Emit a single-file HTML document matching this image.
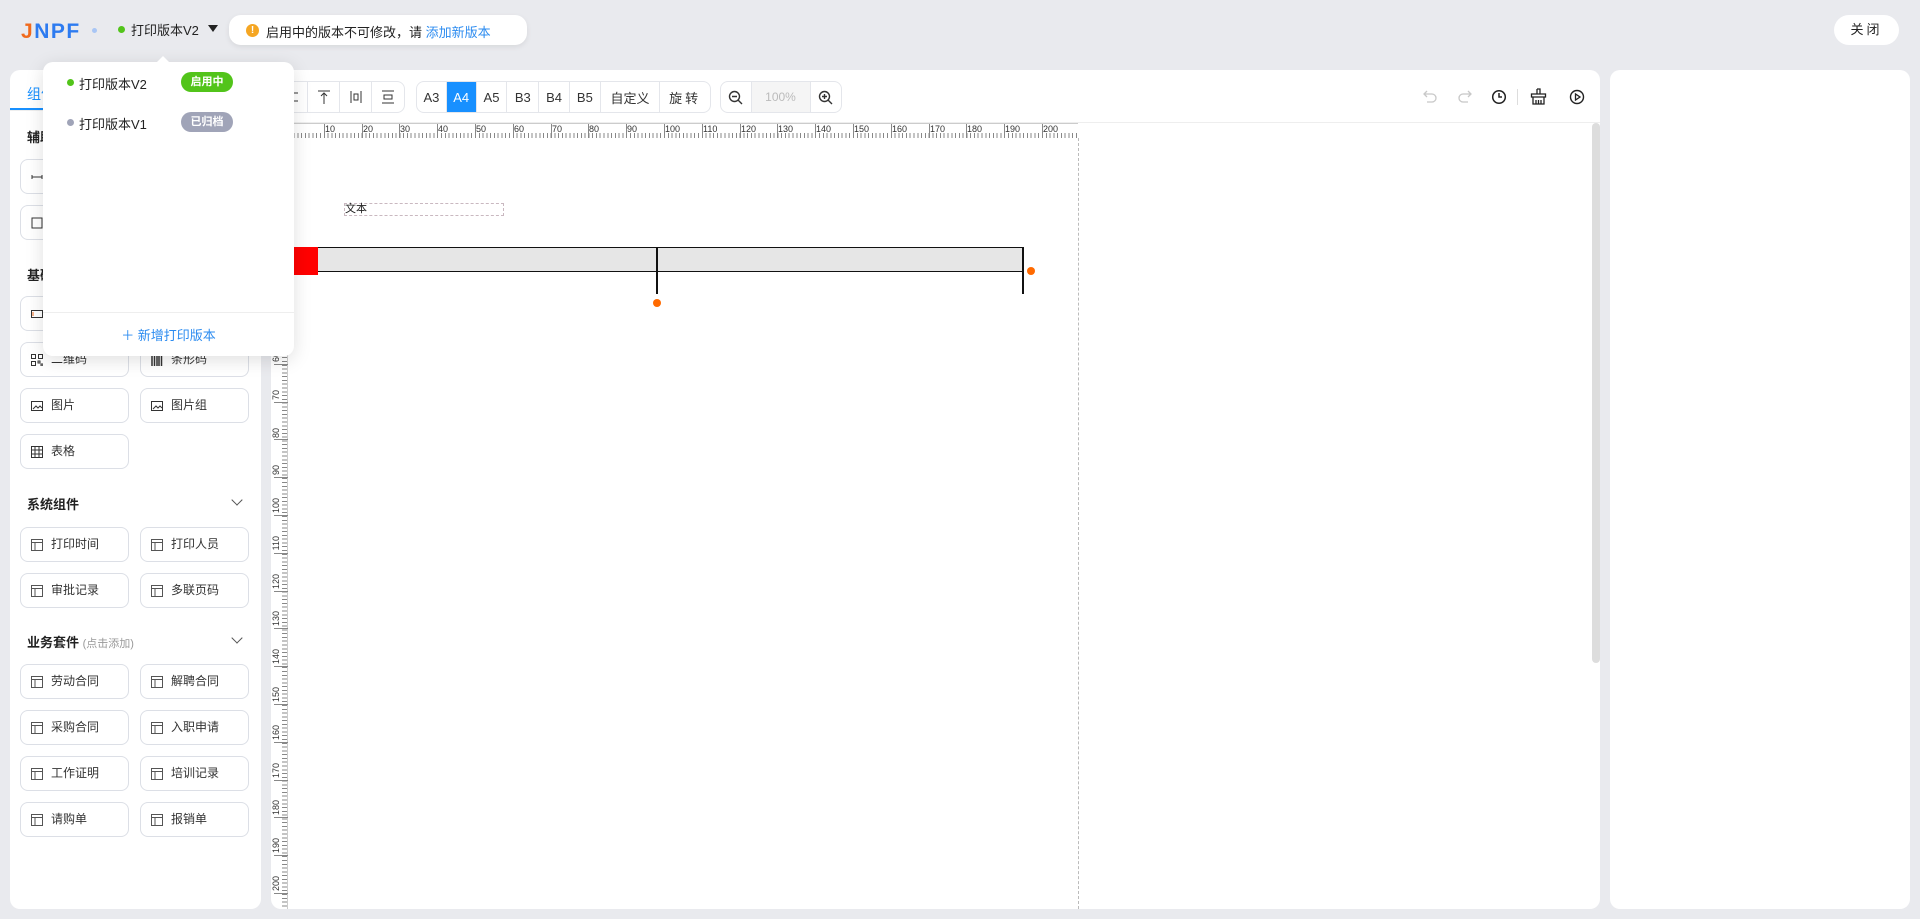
<!DOCTYPE html>
<html><head><meta charset="utf-8">
<style>
*{box-sizing:border-box;margin:0;padding:0}
body{width:1920px;height:919px;background:#e9eaee;font-family:"Liberation Sans","Noto Sans CJK SC",sans-serif;position:relative;overflow:hidden;color:#333}
.abs{position:absolute}
.panel{position:absolute;background:#fff;border-radius:10px}
.btn{position:absolute;width:109px;height:35px;border:1px solid #dcdfe6;border-radius:8px;font-size:12px;color:#333;line-height:33px;padding-left:30px;background:#fff}
.btn svg{position:absolute;left:10px;top:11px}
.sec{position:absolute;left:27px;font-size:13px;font-weight:bold;color:#222}
.chev{position:absolute;left:233px;width:8px;height:8px;border-right:1.3px solid #555;border-bottom:1.3px solid #555;transform:rotate(45deg)}
.grp{position:absolute;top:81px;height:32px;border:1px solid #e4e6eb;border-radius:8px;background:#fff;display:flex;overflow:hidden}
.grp div{height:30px;border-right:1px solid #e4e6eb;display:flex;align-items:center;justify-content:center;font-size:13px;color:#333}
.grp div:last-child{border-right:none}
.hl{position:absolute;top:124px;font-size:9px;color:#333;line-height:10px}
.hm{position:absolute;top:124px;width:1px;height:14px;background:#888}
.vl{position:absolute;left:272px;font-size:9px;color:#333;writing-mode:vertical-rl;transform:rotate(180deg);line-height:9px}
.vm{position:absolute;left:274px;width:14px;height:1px;background:#888}
</style></head><body>

<!-- top bar -->
<div class="abs" style="left:21px;top:20px;font-size:21px;font-weight:bold;letter-spacing:1.5px;font-family:'Liberation Sans',sans-serif"><span style="color:#f06a1d">J</span><span style="color:#2d7bf0">NPF</span></div>
<div class="abs" style="left:92px;top:28px;width:5px;height:5px;border-radius:50%;background:#a9c6f5"></div>
<div class="abs" style="left:118px;top:26px;width:7px;height:7px;border-radius:50%;background:#52c41a"></div>
<div class="abs" style="left:131px;top:20px;font-size:13px;color:#222">打印版本V2</div>
<div class="abs" style="left:208px;top:25px;width:0;height:0;border-left:5px solid transparent;border-right:5px solid transparent;border-top:7px solid #222"></div>
<div class="abs" style="left:229px;top:15px;width:298px;height:30px;background:#fff;border-radius:12px;box-shadow:0 2px 6px rgba(0,0,0,.08)">
  <div class="abs" style="left:17px;top:9px;width:13px;height:13px;border-radius:50%;background:#f5a623;color:#fff;font-size:10px;line-height:13px;text-align:center;font-weight:bold">!</div>
  <div class="abs" style="left:37px;top:7px;font-size:13px;color:#222;white-space:nowrap">启用中的版本不可修改，请 <span style="color:#2d8cf0">添加新版本</span></div>
</div>
<div class="abs" style="left:1834px;top:15px;width:65px;height:30px;background:#fff;border-radius:15px;font-size:13px;line-height:30px;text-align:center;letter-spacing:3px;color:#222">关闭</div>

<!-- left panel -->
<div class="panel" style="left:10px;top:70px;width:251px;height:839px">
  <div class="abs" style="left:17px;top:14px;font-size:14px;color:#1890ff">组件</div>
  <div class="abs" style="left:0;top:38px;width:80px;height:2px;background:#1890ff"></div>
  <div class="abs" style="left:0;top:40px;width:251px;height:1px;background:#eee"></div>
</div>
<div class="sec" style="top:127px">辅助</div>
<div class="btn" style="left:20px;top:159px">横线<svg width="12" height="12"><path d="M1 6h10M1 4v4M11 4v4" stroke="#333" fill="none"/></svg></div>
<div class="btn" style="left:20px;top:205px">矩形<svg width="12" height="12"><rect x="1" y="1" width="10" height="10" stroke="#333" fill="none"/></svg></div>
<div class="sec" style="top:265px">基础</div>
<div class="btn" style="left:20px;top:296px">文本<svg width="12" height="12"><rect x="0.5" y="2.5" width="11" height="7" stroke="#333" fill="none"/><path d="M2 4v4" stroke="#f06a1d"/></svg></div>
<div class="btn" style="left:140px;top:296px">长文本<svg width="12" height="12"><rect x="0.5" y="2.5" width="11" height="7" stroke="#333" fill="none"/></svg></div>
<div class="btn" style="left:20px;top:342px">二维码<svg width="12" height="12"><path d="M0.5 0.5h4v4h-4zM7.5 0.5h4v4h-4zM0.5 7.5h4v4h-4zM7 7h2v2h-2zM10 10h2v2h-2z" stroke="#333" fill="none"/></svg></div>
<div class="btn" style="left:140px;top:342px">条形码<svg width="12" height="12"><path d="M1 0v12M3.5 0v12M6 0v12M8 0v12M10.5 0v12" stroke="#333" stroke-width="1.5"/></svg></div>
<div class="btn" style="left:20px;top:388px">图片<svg width="12" height="12"><rect x="0.5" y="1.5" width="11" height="9" stroke="#333" fill="none"/><path d="M2 9l3-3 2 2 2-2 2 2" stroke="#333" fill="none"/></svg></div>
<div class="btn" style="left:140px;top:388px">图片组<svg width="12" height="12"><rect x="0.5" y="1.5" width="11" height="9" stroke="#333" fill="none"/><path d="M2 9l3-3 2 2 2-2 2 2" stroke="#333" fill="none"/></svg></div>
<div class="btn" style="left:20px;top:434px">表格<svg width="12" height="12"><path d="M0.5 0.5h11v11h-11zM0.5 4h11M0.5 8h11M4 0.5v11M8 0.5v11" stroke="#333" fill="none"/></svg></div>
<div class="sec" style="top:494px">系统组件</div><div class="chev" style="top:496px"></div>
<div class="btn" style="left:20px;top:527px">打印时间<svg width="12" height="12"><path d="M0.5 0.5h11v11h-11zM0.5 3.5h11M4 3.5v8" stroke="#555" fill="none"/></svg></div>
<div class="btn" style="left:140px;top:527px">打印人员<svg width="12" height="12"><path d="M0.5 0.5h11v11h-11zM0.5 3.5h11M4 3.5v8" stroke="#555" fill="none"/></svg></div>
<div class="btn" style="left:20px;top:573px">审批记录<svg width="12" height="12"><path d="M0.5 0.5h11v11h-11zM0.5 3.5h11M4 3.5v8" stroke="#555" fill="none"/></svg></div>
<div class="btn" style="left:140px;top:573px">多联页码<svg width="12" height="12"><path d="M0.5 0.5h11v11h-11zM0.5 3.5h11M4 3.5v8" stroke="#555" fill="none"/></svg></div>
<div class="sec" style="top:632px">业务套件 <span style="font-weight:normal;font-size:11px;color:#999">(点击添加)</span></div><div class="chev" style="top:634px"></div>
<div class="btn" style="left:20px;top:664px">劳动合同<svg width="12" height="12"><path d="M0.5 0.5h11v11h-11zM0.5 3.5h11M4 3.5v8" stroke="#555" fill="none"/></svg></div>
<div class="btn" style="left:140px;top:664px">解聘合同<svg width="12" height="12"><path d="M0.5 0.5h11v11h-11zM0.5 3.5h11M4 3.5v8" stroke="#555" fill="none"/></svg></div>
<div class="btn" style="left:20px;top:710px">采购合同<svg width="12" height="12"><path d="M0.5 0.5h11v11h-11zM0.5 3.5h11M4 3.5v8" stroke="#555" fill="none"/></svg></div>
<div class="btn" style="left:140px;top:710px">入职申请<svg width="12" height="12"><path d="M0.5 0.5h11v11h-11zM0.5 3.5h11M4 3.5v8" stroke="#555" fill="none"/></svg></div>
<div class="btn" style="left:20px;top:756px">工作证明<svg width="12" height="12"><path d="M0.5 0.5h11v11h-11zM0.5 3.5h11M4 3.5v8" stroke="#555" fill="none"/></svg></div>
<div class="btn" style="left:140px;top:756px">培训记录<svg width="12" height="12"><path d="M0.5 0.5h11v11h-11zM0.5 3.5h11M4 3.5v8" stroke="#555" fill="none"/></svg></div>
<div class="btn" style="left:20px;top:802px">请购单<svg width="12" height="12"><path d="M0.5 0.5h11v11h-11zM0.5 3.5h11M4 3.5v8" stroke="#555" fill="none"/></svg></div>
<div class="btn" style="left:140px;top:802px">报销单<svg width="12" height="12"><path d="M0.5 0.5h11v11h-11zM0.5 3.5h11M4 3.5v8" stroke="#555" fill="none"/></svg></div>

<!-- center panel -->
<div class="panel" style="left:271px;top:70px;width:1329px;height:839px;overflow:hidden">
  <div class="abs" style="left:0;top:52px;width:1329px;height:1px;background:#eee"></div>
  <div class="abs" style="left:1321px;top:53px;width:8px;height:540px;background:#ddd;border-radius:4px"></div>
  <div class="abs" style="left:807px;top:68px;width:0;height:771px;border-left:1px dashed #bbb"></div>
</div>
<div class="grp" style="left:275px;width:130px"><div style="width:32px"><svg width="14" height="14"><path d="M1 3h12M1 7h8M1 11h12" stroke="#333"/></svg></div><div style="width:32px"><svg width="14" height="14"><path d="M1 1h12M7 3v11M4 6l3-3 3 3" stroke="#333" fill="none"/></svg></div><div style="width:32px"><svg width="14" height="14"><path d="M2 1v12M12 1v12M5 4h4v6h-4z" stroke="#333" fill="none"/></svg></div><div style="width:32px"><svg width="14" height="14"><path d="M1 1h12M1 13h12M3 5h8v4h-8z" stroke="#333" fill="none"/></svg></div></div>
<div class="grp" style="left:416px;width:295px"><div style="width:30px">A3</div><div style="width:30px;background:#1890ff;color:#fff">A4</div><div style="width:31px">A5</div><div style="width:32px">B3</div><div style="width:31px">B4</div><div style="width:31px">B5</div><div style="width:60px">自定义</div><div style="width:50px;letter-spacing:3px">旋转</div></div>
<div class="grp" style="left:720px;width:122px"><div style="width:31px"><svg width="15" height="15"><circle cx="6.5" cy="6.5" r="5" stroke="#333" fill="none" stroke-width="1.4"/><path d="M4 6.5h5M10 10l4 4" stroke="#333" stroke-width="1.4"/></svg></div><div style="width:60px;background:#f5f5f5;color:#bbb;font-size:12px">100%</div><div style="width:31px"><svg width="15" height="15"><circle cx="6.5" cy="6.5" r="5" stroke="#333" fill="none" stroke-width="1.4"/><path d="M4 6.5h5M6.5 4v5M10 10l4 4" stroke="#333" stroke-width="1.4"/></svg></div></div>
<!-- right toolbar icons -->
<svg class="abs" style="left:1422px;top:89px" width="16" height="16"><path d="M5 2L2 5l3 3M2 5h8a4 4 0 0 1 0 8H5" stroke="#c8c8c8" fill="none" stroke-width="1.3"/></svg>
<svg class="abs" style="left:1457px;top:89px" width="16" height="16"><path d="M11 2l3 3-3 3M14 5H6a4 4 0 0 0 0 8h5" stroke="#c8c8c8" fill="none" stroke-width="1.3"/></svg>
<svg class="abs" style="left:1491px;top:89px" width="16" height="16"><circle cx="8" cy="8" r="6.3" stroke="#222" fill="none" stroke-width="1.5"/><path d="M8 4v4h3" stroke="#222" fill="none" stroke-width="1.5"/></svg>
<div class="abs" style="left:1517px;top:89px;width:1px;height:16px;background:#ddd"></div>
<svg class="abs" style="left:1530px;top:88px" width="17" height="17"><path d="M7 1h3v5M7 1v5M1.5 6h14v3h-14zM3 9v7h11V9M6 12v4M8.5 12v4M11 12v4" stroke="#222" fill="none" stroke-width="1.3"/></svg>
<svg class="abs" style="left:1569px;top:89px" width="16" height="16"><circle cx="8" cy="8" r="6.5" stroke="#222" fill="none" stroke-width="1.4"/><path d="M6.5 5v6l4.5-3z" stroke="#222" fill="none" stroke-width="1.3"/></svg>

<!-- horizontal ruler -->
<div class="abs" style="left:286px;top:123px;width:792px;height:15px;border-top:1px solid #ccc;background:repeating-linear-gradient(to right,#888 0 1px,transparent 1px 3.78px) bottom/100% 5px no-repeat"></div>
<div class="hm" style="left:286px"></div><div class="hm" style="left:324px"></div><div class="hm" style="left:362px"></div><div class="hm" style="left:399px"></div><div class="hm" style="left:437px"></div><div class="hm" style="left:475px"></div><div class="hm" style="left:513px"></div><div class="hm" style="left:551px"></div><div class="hm" style="left:588px"></div><div class="hm" style="left:626px"></div><div class="hm" style="left:664px"></div><div class="hm" style="left:702px"></div><div class="hm" style="left:740px"></div><div class="hm" style="left:777px"></div><div class="hm" style="left:815px"></div><div class="hm" style="left:853px"></div><div class="hm" style="left:891px"></div><div class="hm" style="left:929px"></div><div class="hm" style="left:966px"></div><div class="hm" style="left:1004px"></div><div class="hm" style="left:1042px"></div>
<div class="hl" style="left:325px">10</div><div class="hl" style="left:363px">20</div><div class="hl" style="left:400px">30</div><div class="hl" style="left:438px">40</div><div class="hl" style="left:476px">50</div><div class="hl" style="left:514px">60</div><div class="hl" style="left:552px">70</div><div class="hl" style="left:589px">80</div><div class="hl" style="left:627px">90</div><div class="hl" style="left:665px">100</div><div class="hl" style="left:703px">110</div><div class="hl" style="left:741px">120</div><div class="hl" style="left:778px">130</div><div class="hl" style="left:816px">140</div><div class="hl" style="left:854px">150</div><div class="hl" style="left:892px">160</div><div class="hl" style="left:930px">170</div><div class="hl" style="left:967px">180</div><div class="hl" style="left:1005px">190</div><div class="hl" style="left:1043px">200</div>

<!-- vertical ruler -->
<div class="abs" style="left:271px;top:138px;width:17px;height:771px;border-right:1px solid #ccc;background:repeating-linear-gradient(to bottom,#888 0 1px,transparent 1px 3.78px) right/5px 100% no-repeat"></div>
<div class="vm" style="top:175px"></div><div class="vm" style="top:213px"></div><div class="vm" style="top:250px"></div><div class="vm" style="top:288px"></div><div class="vm" style="top:326px"></div><div class="vm" style="top:364px"></div><div class="vm" style="top:402px"></div><div class="vm" style="top:439px"></div><div class="vm" style="top:477px"></div><div class="vm" style="top:515px"></div><div class="vm" style="top:553px"></div><div class="vm" style="top:591px"></div><div class="vm" style="top:628px"></div><div class="vm" style="top:666px"></div><div class="vm" style="top:704px"></div><div class="vm" style="top:742px"></div><div class="vm" style="top:780px"></div><div class="vm" style="top:817px"></div><div class="vm" style="top:855px"></div><div class="vm" style="top:893px"></div>
<div class="vl" style="top:352px">60</div><div class="vl" style="top:390px">70</div><div class="vl" style="top:428px">80</div><div class="vl" style="top:465px">90</div><div class="vl" style="top:498px">100</div><div class="vl" style="top:536px">110</div><div class="vl" style="top:574px">120</div><div class="vl" style="top:611px">130</div><div class="vl" style="top:649px">140</div><div class="vl" style="top:687px">150</div><div class="vl" style="top:725px">160</div><div class="vl" style="top:763px">170</div><div class="vl" style="top:800px">180</div><div class="vl" style="top:838px">190</div><div class="vl" style="top:876px">200</div>

<!-- canvas content -->
<div class="abs" style="left:344px;top:203px;width:160px;height:13px;border:1px dashed #c9b8c0;font-size:11px;line-height:11px;color:#222">文本</div>
<div class="abs" style="left:294px;top:247px;width:730px;height:25px;background:#e6e6e6;border-top:1.5px solid #111;border-bottom:1.5px solid #111;border-right:1.5px solid #111"></div>
<div class="abs" style="left:294px;top:247px;width:24px;height:28px;background:#f00"></div>
<div class="abs" style="left:656px;top:247px;width:1.5px;height:47px;background:#111"></div>
<div class="abs" style="left:1022px;top:247px;width:1.5px;height:47px;background:#111"></div>
<div class="abs" style="left:653px;top:299px;width:8px;height:8px;border-radius:50%;background:#ff6a00"></div>
<div class="abs" style="left:1027px;top:267px;width:8px;height:8px;border-radius:50%;background:#ff6a00"></div>

<!-- right panel -->
<div class="panel" style="left:1610px;top:70px;width:300px;height:839px"></div>

<!-- popover -->
<div class="abs" style="left:43px;top:62px;width:251px;height:294px;background:#fff;border-radius:10px;box-shadow:0 4px 18px rgba(0,0,0,.13)">
  <div class="abs" style="left:24px;top:17px;width:7px;height:7px;border-radius:50%;background:#52c41a"></div>
  <div class="abs" style="left:36px;top:12px;font-size:13px;color:#222">打印版本V2</div>
  <div class="abs" style="left:138px;top:10px;width:52px;height:20px;border-radius:10px;background:#52c41a;color:#fff;font-size:11px;font-weight:bold;line-height:20px;text-align:center">启用中</div>
  <div class="abs" style="left:24px;top:57px;width:7px;height:7px;border-radius:50%;background:#a0a4b8"></div>
  <div class="abs" style="left:36px;top:52px;font-size:13px;color:#222">打印版本V1</div>
  <div class="abs" style="left:138px;top:50px;width:52px;height:20px;border-radius:10px;background:#a0a4b8;color:#fff;font-size:11px;font-weight:bold;line-height:20px;text-align:center">已归档</div>
  <div class="abs" style="left:0;top:250px;width:251px;height:1px;background:#eee"></div>
  <div class="abs" style="left:0;top:263px;width:251px;text-align:center;font-size:13px;color:#2d8cf0">＋ 新增打印版本</div>
</div>
<div class="abs" style="left:156px;top:56px;width:0;height:0;border-left:7px solid transparent;border-right:7px solid transparent;border-bottom:7px solid #fff"></div>
</body></html>
